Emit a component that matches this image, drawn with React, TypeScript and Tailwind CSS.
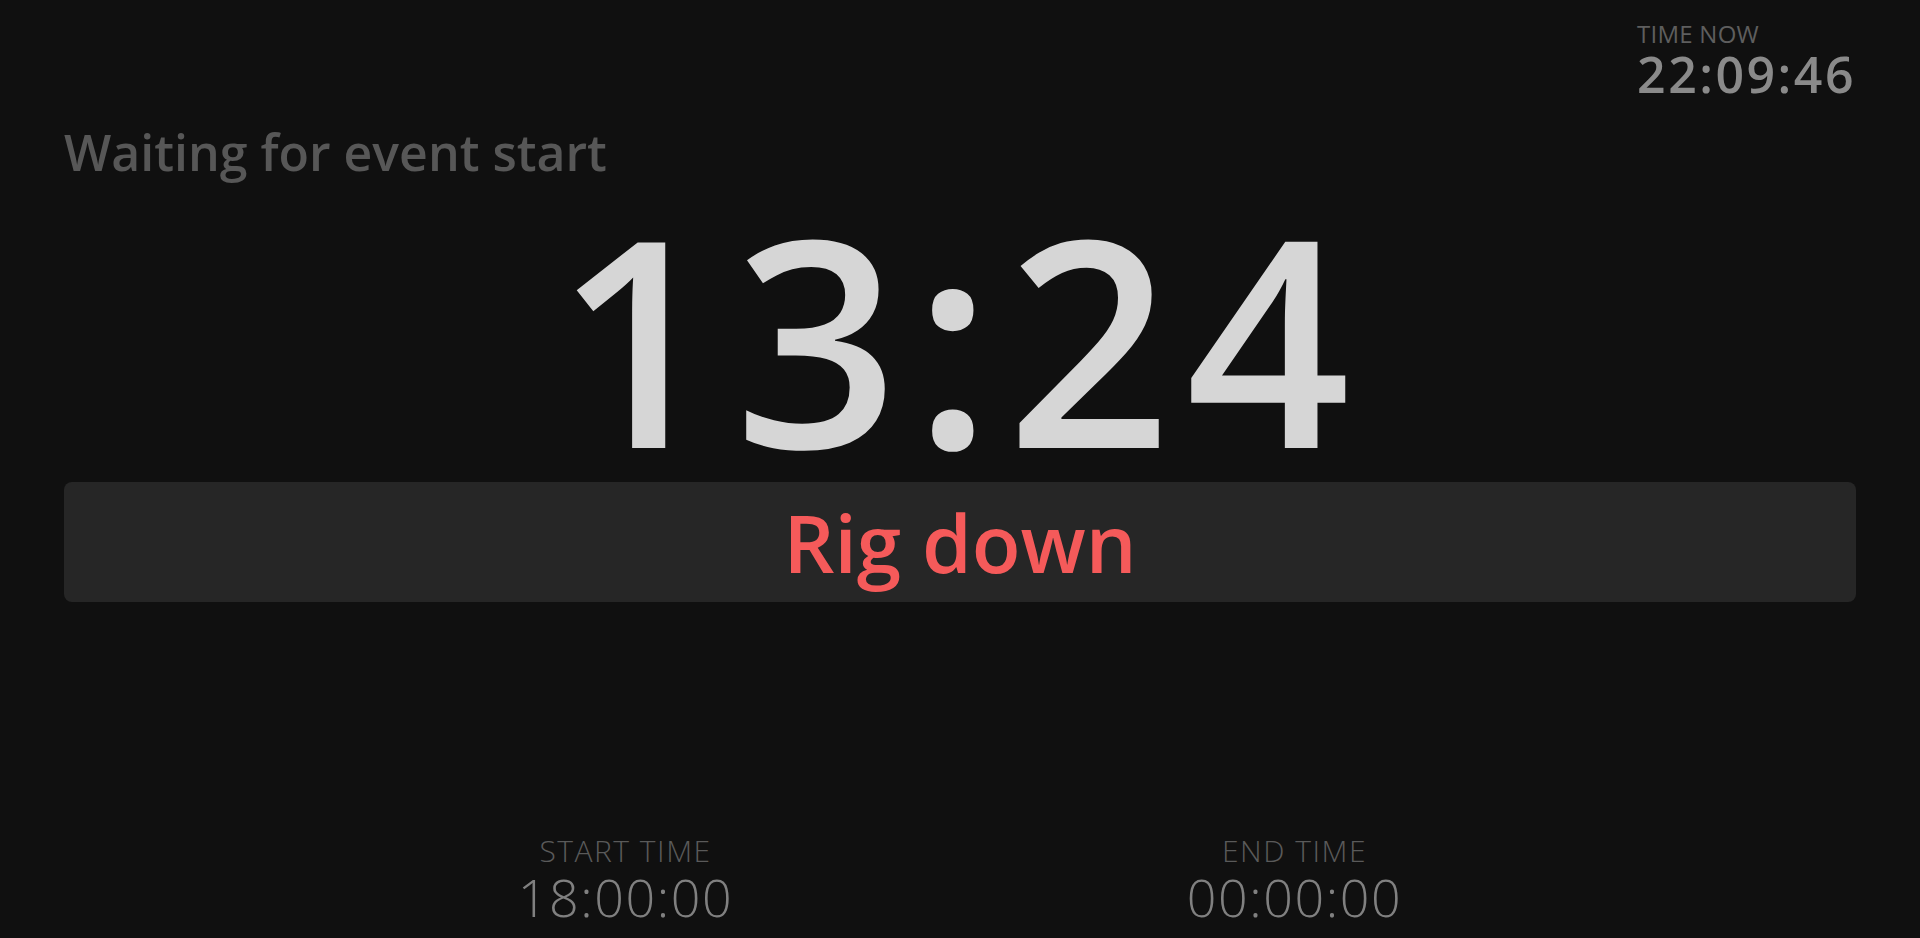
export default function App() {
  return (
    <div className="min-h-screen w-full overflow-hidden bg-[#101010] px-16 flex flex-col font-['Open_Sans',sans-serif]">
      {/* Clock */}
      <div className="flex justify-end pt-[22px]">
        <div className="flex flex-col">
          <span className="text-[24px] leading-none text-[#5e5e5e] uppercase tracking-[0.01em]">Time now</span>
          <span className="mt-[3px] text-[50px] leading-none font-semibold text-[#8a8a8a] tracking-[0.05em]">
            22:09:46
          </span>
        </div>
      </div>

      {/* Title */}
      <div className="mt-[28px] text-[50px] leading-none font-semibold text-[#575757]">
        Waiting for event start
      </div>

      {/* Timer */}
      <div className="mt-[15px] text-center text-[288px] leading-none font-semibold text-[#d6d6d6] tracking-[0.05em]">
        13:24
      </div>

      {/* Message */}
      <div className="mt-[2px] h-[120px] rounded-lg bg-[#262626] flex items-center justify-center">
        <span className="text-[80px] leading-none font-semibold text-[#f55a5a]">Rig down</span>
      </div>

      {/* Schedule */}
      <div className="mt-auto pb-[15px] flex justify-center">
        <div className="w-[669px] flex flex-col items-center">
          <span className="text-[30px] leading-none font-light text-[#5a5a5a] uppercase tracking-[0.05em]">Start time</span>
          <span className="mt-[5px] text-[52px] leading-none font-light text-[#808080] tracking-[0.03em]">
            18:00:00
          </span>
        </div>
        <div className="w-[669px] flex flex-col items-center">
          <span className="text-[30px] leading-none font-light text-[#5a5a5a] uppercase tracking-[0.05em]">End time</span>
          <span className="mt-[5px] text-[52px] leading-none font-light text-[#808080] tracking-[0.03em]">
            00:00:00
          </span>
        </div>
      </div>
    </div>
  );
}
